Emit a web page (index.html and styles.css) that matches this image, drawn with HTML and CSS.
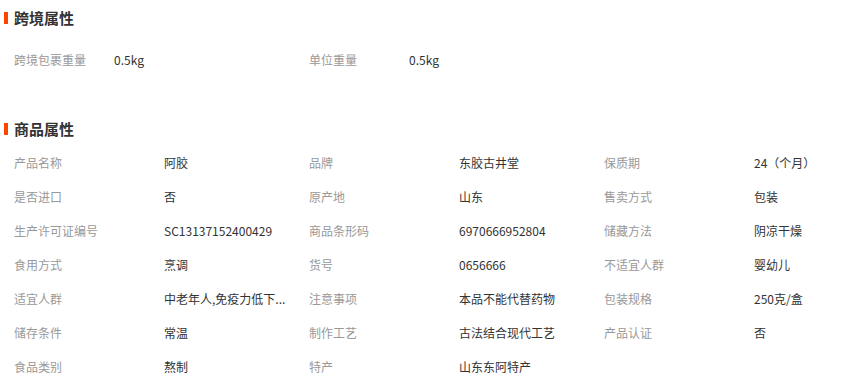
FILE: index.html
```html
<!DOCTYPE html>
<html lang="zh-CN">
<head>
<meta charset="utf-8">
<title>属性</title>
<link rel="stylesheet" href="styles.css">
</head>
<body>
<div class="attrs">
  <section class="block block-cross">
    <h3 class="block-title">跨境属性</h3>
    <ul class="list list-cross">
      <li class="item"><span class="label">跨境包裹重量</span><span class="value">0.5kg</span></li>
      <li class="item"><span class="label">单位重量</span><span class="value">0.5kg</span></li>
    </ul>
  </section>
  <section class="block block-goods">
    <h3 class="block-title">商品属性</h3>
    <ul class="list list-goods">
      <li class="item"><span class="label">产品名称</span><span class="value">阿胶</span></li>
      <li class="item"><span class="label">品牌</span><span class="value">东胶古井堂</span></li>
      <li class="item"><span class="label">保质期</span><span class="value">24（个月）</span></li>
      <li class="item"><span class="label">是否进口</span><span class="value">否</span></li>
      <li class="item"><span class="label">原产地</span><span class="value">山东</span></li>
      <li class="item"><span class="label">售卖方式</span><span class="value">包装</span></li>
      <li class="item"><span class="label">生产许可证编号</span><span class="value">SC13137152400429</span></li>
      <li class="item"><span class="label">商品条形码</span><span class="value">6970666952804</span></li>
      <li class="item"><span class="label">储藏方法</span><span class="value">阴凉干燥</span></li>
      <li class="item"><span class="label">食用方式</span><span class="value">烹调</span></li>
      <li class="item"><span class="label">货号</span><span class="value">0656666</span></li>
      <li class="item"><span class="label">不适宜人群</span><span class="value">婴幼儿</span></li>
      <li class="item"><span class="label">适宜人群</span><span class="value">中老年人,免疫力低下...</span></li>
      <li class="item"><span class="label">注意事项</span><span class="value">本品不能代替药物</span></li>
      <li class="item"><span class="label">包装规格</span><span class="value">250克/盒</span></li>
      <li class="item"><span class="label">储存条件</span><span class="value">常温</span></li>
      <li class="item"><span class="label">制作工艺</span><span class="value">古法结合现代工艺</span></li>
      <li class="item"><span class="label">产品认证</span><span class="value">否</span></li>
      <li class="item"><span class="label">食品类别</span><span class="value">熬制</span></li>
      <li class="item"><span class="label">特产</span><span class="value">山东东阿特产</span></li>
    </ul>
  </section>
</div>
</body>
</html>
```

FILE: styles.css
```css
* {
  box-sizing: border-box;
}

html, body {
  margin: 0;
  padding: 0;
  background: #ffffff;
}

body {
  font-family: "Noto Sans CJK SC", "Noto Sans", sans-serif;
  font-size: 12px;
  color: #333333;
}

.attrs {
  width: 862px;
  padding-top: 8px;
}

.block-title {
  margin: 0;
  height: 20px;
  line-height: 20px;
  font-size: 15px;
  font-weight: bold;
  color: #333333;
  display: flex;
  align-items: center;
  padding-left: 4px;
}

.block-title::before {
  content: "";
  display: block;
  width: 4px;
  height: 12px;
  background: #ff4400;
  margin-right: 6px;
}

.list {
  list-style: none;
  margin: 0;
  padding: 0 0 0 14px;
  display: grid;
  grid-template-columns: repeat(3, 295px);
}

.list-cross {
  margin-top: 15px;
  margin-bottom: 42px;
}

.list-goods {
  margin-top: 7px;
}

.item {
  display: flex;
  height: 34px;
  line-height: 34px;
  white-space: nowrap;
}

.label {
  color: #999999;
  flex: none;
}

.value {
  color: #333333;
  white-space: nowrap;
}

.list-cross .label {
  width: 100px;
}

.list-cross .value {
  width: 195px;
}

.list-goods .label {
  width: 150px;
}

.list-goods .value {
  width: 145px;
}
```
